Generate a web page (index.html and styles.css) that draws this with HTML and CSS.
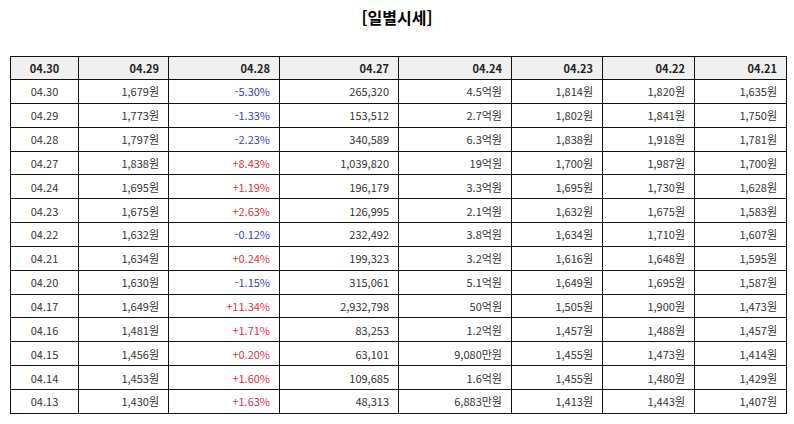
FILE: index.html
```html
<!DOCTYPE html>
<html lang="ko">
<head>
<meta charset="utf-8">
<title>일별시세</title>
<link rel="stylesheet" href="styles.css">
</head>
<body>
<h1 class="title">[일별시세]</h1>
<table class="quotes">
<colgroup>
<col class="c1"><col class="c2"><col class="c3"><col class="c4"><col class="c5"><col class="c6"><col class="c7"><col class="c8">
</colgroup>
<thead>
<tr><th class="center">04.30</th><th>04.29</th><th>04.28</th><th>04.27</th><th>04.24</th><th>04.23</th><th>04.22</th><th>04.21</th></tr>
</thead>
<tbody>
<tr><td class="center">04.30</td><td>1,679원</td><td class="down">-5.30%</td><td>265,320</td><td>4.5억원</td><td>1,814원</td><td>1,820원</td><td>1,635원</td></tr>
<tr><td class="center">04.29</td><td>1,773원</td><td class="down">-1.33%</td><td>153,512</td><td>2.7억원</td><td>1,802원</td><td>1,841원</td><td>1,750원</td></tr>
<tr><td class="center">04.28</td><td>1,797원</td><td class="down">-2.23%</td><td>340,589</td><td>6.3억원</td><td>1,838원</td><td>1,918원</td><td>1,781원</td></tr>
<tr><td class="center">04.27</td><td>1,838원</td><td class="up">+8.43%</td><td>1,039,820</td><td>19억원</td><td>1,700원</td><td>1,987원</td><td>1,700원</td></tr>
<tr><td class="center">04.24</td><td>1,695원</td><td class="up">+1.19%</td><td>196,179</td><td>3.3억원</td><td>1,695원</td><td>1,730원</td><td>1,628원</td></tr>
<tr><td class="center">04.23</td><td>1,675원</td><td class="up">+2.63%</td><td>126,995</td><td>2.1억원</td><td>1,632원</td><td>1,675원</td><td>1,583원</td></tr>
<tr><td class="center">04.22</td><td>1,632원</td><td class="down">-0.12%</td><td>232,492</td><td>3.8억원</td><td>1,634원</td><td>1,710원</td><td>1,607원</td></tr>
<tr><td class="center">04.21</td><td>1,634원</td><td class="up">+0.24%</td><td>199,323</td><td>3.2억원</td><td>1,616원</td><td>1,648원</td><td>1,595원</td></tr>
<tr><td class="center">04.20</td><td>1,630원</td><td class="down">-1.15%</td><td>315,061</td><td>5.1억원</td><td>1,649원</td><td>1,695원</td><td>1,587원</td></tr>
<tr><td class="center">04.17</td><td>1,649원</td><td class="up">+11.34%</td><td>2,932,798</td><td>50억원</td><td>1,505원</td><td>1,900원</td><td>1,473원</td></tr>
<tr><td class="center">04.16</td><td>1,481원</td><td class="up">+1.71%</td><td>83,253</td><td>1.2억원</td><td>1,457원</td><td>1,488원</td><td>1,457원</td></tr>
<tr><td class="center">04.15</td><td>1,456원</td><td class="up">+0.20%</td><td>63,101</td><td>9,080만원</td><td>1,455원</td><td>1,473원</td><td>1,414원</td></tr>
<tr><td class="center">04.14</td><td>1,453원</td><td class="up">+1.60%</td><td>109,685</td><td>1.6억원</td><td>1,455원</td><td>1,480원</td><td>1,429원</td></tr>
<tr><td class="center">04.13</td><td>1,430원</td><td class="up">+1.63%</td><td>48,313</td><td>6,883만원</td><td>1,413원</td><td>1,443원</td><td>1,407원</td></tr>
</tbody>
</table>
</body>
</html>
```
FILE: styles.css
```css
html, body {
  margin: 0;
  padding: 0;
  background: #fff;
}
body {
  font-family: "Noto Sans CJK KR", "Noto Sans", sans-serif;
  color: #333;
}
.title {
  margin: 0;
  padding-top: 5px;
  height: 56px;
  box-sizing: border-box;
  text-align: center;
  font-size: 16px;
  font-weight: bold;
  line-height: 24px;
  color: #000;
}
.quotes {
  margin-left: 10px;
  width: 776px;
  border-collapse: collapse;
  table-layout: fixed;
  font-size: 11px;
}
.c1 { width: 68px; }
.c2 { width: 90px; }
.c3 { width: 111px; }
.c4 { width: 119px; }
.c5 { width: 113px; }
.c6 { width: 91px; }
.c7 { width: 92px; }
.c8 { width: 92px; }
.quotes th,
.quotes td {
  border: 1px solid #111;
  padding: 0 9px 0 0;
  text-align: right;
  white-space: nowrap;
}
.quotes th {
  background: #f0f0f0;
  font-weight: bold;
  color: #222;
  height: 22px;
  line-height: 20px;
}
.quotes td {
  height: 22.85px;
  line-height: 20px;
}
.quotes .center {
  text-align: center;
  padding: 0;
}
.quotes .down { color: #3c3cc8; }
.quotes .up { color: #e0323c; }
```
